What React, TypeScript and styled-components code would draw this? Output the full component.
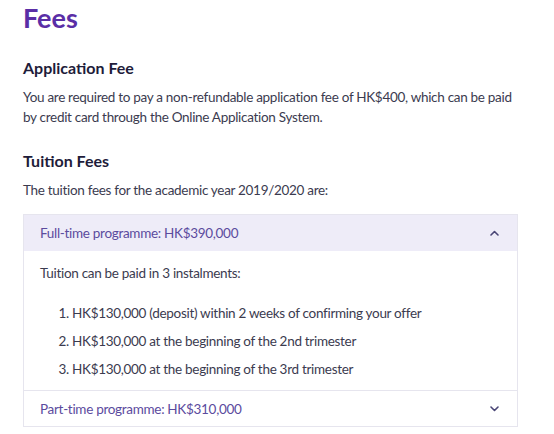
import { createGlobalStyle } from "styled-components";
import styled from "styled-components";

const GlobalStyle = createGlobalStyle`
  html, body {
    margin: 0;
    padding: 0;
    background: #ffffff;
  }
  body {
    font-family: "Lato", "Open Sans", sans-serif;
    color: #3b3b4f;
    letter-spacing: -0.3px;
  }
`;

const Page = styled.main`
  width: 495px;
  padding: 0 36px 0 23px;
`;

const Title = styled.h1`
  margin: 0;
  padding-top: 1px;
  font-size: 27px;
  line-height: 34px;
  font-weight: 700;
  letter-spacing: 0;
  color: #5a2ea6;
`;

const Section = styled.section<{ $top: number }>`
  margin-top: ${(p) => p.$top}px;
`;

const Heading = styled.h2`
  margin: 0 0 8px;
  font-size: 16px;
  line-height: 22px;
  font-weight: 700;
  letter-spacing: 0;
  color: #1e1c3a;
`;

const Text = styled.p`
  margin: 0;
  font-size: 13.5px;
  line-height: 20px;
  color: #3b3b4f;
`;

const Accordion = styled.div`
  margin-top: 14px;
  border: 1px solid #e6e5ee;
`;

const Header = styled.button<{ $open?: boolean }>`
  display: flex;
  align-items: center;
  justify-content: space-between;
  width: 100%;
  height: 36px;
  padding: 0 18px 0 16px;
  border: none;
  border-top: ${(p) => (p.$open ? "none" : "1px solid #e6e5ee")};
  background: ${(p) => (p.$open ? "#eeecf8" : "#ffffff")};
  font-family: inherit;
  font-size: 13.5px;
  letter-spacing: inherit;
  color: #5b4b9e;
  text-align: left;
  cursor: pointer;
`;

const Chevron = ({ up }: { up?: boolean }) => (
  <svg width="9" height="6" viewBox="0 0 9 6" fill="none">
    <path
      d={up ? "M1 5 L4.5 1.5 L8 5" : "M1 1 L4.5 4.5 L8 1"}
      stroke="#4a4676"
      strokeWidth="1.6"
      strokeLinecap="round"
      strokeLinejoin="round"
    />
  </svg>
);

const Panel = styled.div`
  padding: 12px 16px 7px;
`;

const List = styled.ol`
  margin: 16px 0 0;
  padding-left: 32px;
  font-size: 13.5px;
  line-height: 28px;
  color: #3b3b4f;
`;

const App = () => {
  return (
    <>
      <GlobalStyle />
      <Page>
        <Title>Fees</Title>
        <Section $top={22}>
          <Heading>Application Fee</Heading>
          <Text>
            You are required to pay a non-refundable application fee of HK$400, which can be paid
            by credit card through the Online Application System.
          </Text>
        </Section>
        <Section $top={23}>
          <Heading>Tuition Fees</Heading>
          <Text>The tuition fees for the academic year 2019/2020 are:</Text>
          <Accordion>
            <Header $open>
              <span>Full-time programme: HK$390,000</span>
              <Chevron up />
            </Header>
            <Panel>
              <Text>Tuition can be paid in 3 instalments:</Text>
              <List>
                <li>HK$130,000 (deposit) within 2 weeks of confirming your offer</li>
                <li>HK$130,000 at the beginning of the 2nd trimester</li>
                <li>HK$130,000 at the beginning of the 3rd trimester</li>
              </List>
            </Panel>
            <Header>
              <span>Part-time programme: HK$310,000</span>
              <Chevron />
            </Header>
          </Accordion>
        </Section>
      </Page>
    </>
  );
};

export default App;
